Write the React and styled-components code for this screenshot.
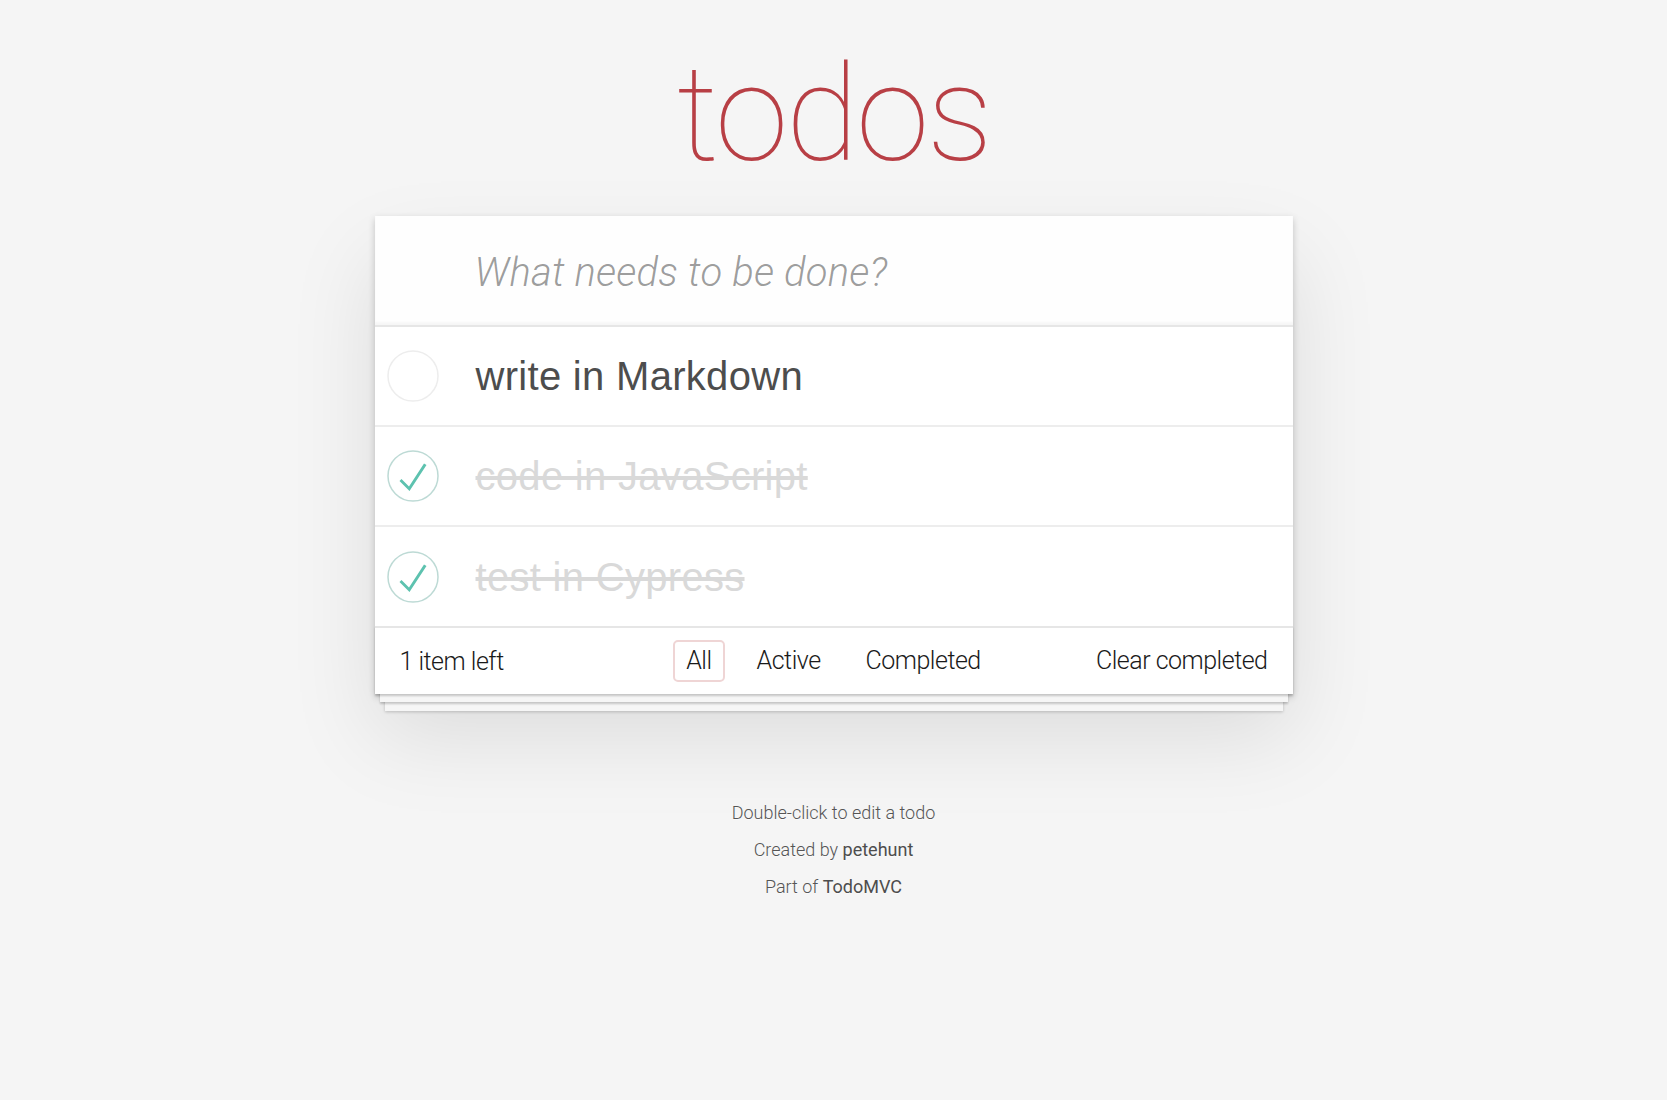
import styled, { createGlobalStyle } from "styled-components";

const GlobalStyle = createGlobalStyle`
    html, body {
        margin: 0;
        padding: 0;
    }

    body {
        background: #f5f5f5;
        font-family: Roboto, 'Liberation Sans', sans-serif;
        color: #111111;
        -webkit-font-smoothing: antialiased;
    }
`

const Page = styled.div`
    width: 918px;
    margin: 0 auto;
`

const Title = styled.h1`
    margin: 0;
    height: 216px;
    box-sizing: border-box;
    padding-top: 37px;
    font-family: Roboto, sans-serif;
    font-size: 133px;
    font-weight: 100;
    line-height: 156px;
    letter-spacing: -2.5px;
    text-align: center;
    color: #b83f45;
`

const Card = styled.section`
    background: #fff;
    box-shadow: 0 3px 7px 0 rgba(0, 0, 0, 0.2), 0 42px 83px 0 rgba(0, 0, 0, 0.1);
`

const NewTodo = styled.input`
    display: block;
    width: 100%;
    height: 109px;
    box-sizing: border-box;
    padding: 4px 27px 0 100px;
    border: none;
    outline: none;
    background: rgba(0, 0, 0, 0.003);
    box-shadow: inset 0 -3px 2px rgba(0, 0, 0, 0.03);
    font-family: Roboto, sans-serif;
    font-size: 40px;
    font-weight: 300;
    color: #4d4d4d;

    &::placeholder {
        font-style: italic;
        font-weight: 300;
        letter-spacing: 0.2px;
        color: rgba(0, 0, 0, 0.4);
    }
`

const List = styled.ul`
    margin: 0;
    padding: 0;
    list-style: none;
    border-top: 2px solid #e6e6e6;
`

const Item = styled.li`
    display: flex;
    align-items: center;
    height: 98px;
    padding-left: 12px;
    border-bottom: 2px solid #ededed;

    &:last-child {
        height: 99px;
        border-bottom: none;
    }
`

const Label = styled.label`
    margin-left: 37px;
    font-family: 'Liberation Sans', Arial, sans-serif;
    font-size: 40px;
    font-weight: 400;
    line-height: 48px;
    letter-spacing: 0.3px;
    color: ${p => (p.$done ? "#d9d9d9" : "#4d4d4d")};
    text-decoration: ${p => (p.$done ? "line-through" : "none")};
`

const Footer = styled.footer`
    display: grid;
    grid-template-columns: 1fr auto 1fr;
    align-items: center;
    height: 66px;
    padding: 0 25px;
    border-top: 2px solid #e6e6e6;
    font-size: 25px;
    font-weight: 300;
    letter-spacing: -0.5px;
    color: #1a1a1a;
    box-shadow: 0 2px 2px rgba(0, 0, 0, 0.2),
        0 13px 0 -5px #f6f6f6,
        0 15px 2px -5px rgba(0, 0, 0, 0.2),
        0 27px 0 -10px #f6f6f6,
        0 28px 3px -10px rgba(0, 0, 0, 0.2);
`

const Count = styled.span`
    justify-self: start;
`

const Filters = styled.ul`
    display: flex;
    gap: 19px;
    margin: 0;
    padding: 0;
    list-style: none;
`

const Filter = styled.a`
    display: block;
    padding: 4px 11px;
    border: 2px solid ${p => (p.$selected ? "rgba(175, 47, 47, 0.2)" : "transparent")};
    border-radius: 5px;
    line-height: 30px;
    color: inherit;
    text-decoration: none;
    cursor: pointer;
`

const ClearButton = styled.button`
    justify-self: end;
    margin: 0;
    padding: 0;
    border: none;
    background: none;
    font: inherit;
    letter-spacing: inherit;
    color: inherit;
    line-height: 30px;
    cursor: pointer;
`

const Info = styled.footer`
    margin-top: 110px;
    text-align: center;
    font-size: 18px;
    font-weight: 300;
    color: #555555;
    text-shadow: 0 1px 0 rgba(255, 255, 255, 0.5);
`

const InfoLine = styled.p`
    margin: 0 0 19px;
    line-height: 18px;
`

const InfoLink = styled.a`
    font-weight: 400;
    color: #4d4d4d;
    text-decoration: none;
`

function Toggle({ done }) {
    return (
        <svg width="52" height="52" viewBox="-2 -2 104 104">
            <circle cx="50" cy="50" r="50" fill="none" stroke={done ? "#bddad5" : "#ededed"} strokeWidth="3" />
            {done && <path d="M72 25L42 71 27 56l-4 4 20 20 34-52z" fill="#5dc2af" />}
        </svg>
    )
}

const todos = [
    { title: "write in Markdown", done: false },
    { title: "code in JavaScript", done: true },
    { title: "test in Cypress", done: true },
]

export default function App() {
    return <>
        <GlobalStyle />
        <Page>
            <Title>todos</Title>
            <Card>
                <NewTodo placeholder="What needs to be done?" />
                <List>
                    {todos.map(todo => (
                        <Item key={todo.title}>
                            <Toggle done={todo.done} />
                            <Label $done={todo.done}>{todo.title}</Label>
                        </Item>
                    ))}
                </List>
                <Footer>
                    <Count>1 item left</Count>
                    <Filters>
                        <li><Filter $selected>All</Filter></li>
                        <li><Filter>Active</Filter></li>
                        <li><Filter>Completed</Filter></li>
                    </Filters>
                    <ClearButton>Clear completed</ClearButton>
                </Footer>
            </Card>
            <Info>
                <InfoLine>Double-click to edit a todo</InfoLine>
                <InfoLine>Created by <InfoLink>petehunt</InfoLink></InfoLine>
                <InfoLine>Part of <InfoLink>TodoMVC</InfoLink></InfoLine>
            </Info>
        </Page>
    </>
}
